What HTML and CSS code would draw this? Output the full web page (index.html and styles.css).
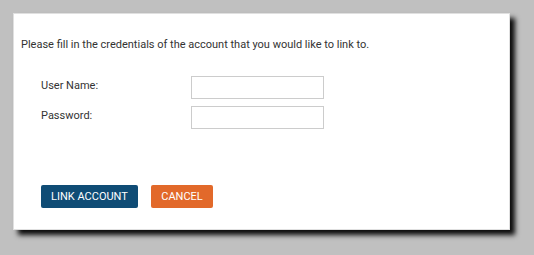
FILE: index.html
```html
<!DOCTYPE html>
<html>
<head>
<meta charset="utf-8">
<link rel="stylesheet" href="styles.css">
</head>
<body>
<div class="dialog">
  <p class="intro">Please fill in the credentials of the account that you would like to link to.</p>
  <div class="form">
    <div class="row">
      <label class="label">User Name:</label>
      <input class="field" type="text">
    </div>
    <div class="row">
      <label class="label">Password:</label>
      <input class="field" type="password">
    </div>
  </div>
  <div class="actions">
    <button class="btn btn-primary">LINK ACCOUNT</button>
    <button class="btn btn-cancel">CANCEL</button>
  </div>
</div>
</body>
</html>
```
FILE: styles.css
```css
html, body {
  margin: 0;
  padding: 0;
  background: #c0c0c0;
}
body {
  padding: 13px;
  font-family: Roboto, "Liberation Sans", sans-serif;
  font-size: 11px;
  color: #333;
}
.dialog {
  box-sizing: border-box;
  width: 497px;
  height: 217px;
  background: #fff;
  border: 1px solid #e0e0e0;
  box-shadow: 5px 5px 5px rgba(0,0,0,0.95);
  padding: 24px 0 0 7px;
}
.intro {
  margin: 0;
  line-height: 13px;
}
.form {
  margin-top: 25px;
  padding-left: 20px;
  display: flex;
  flex-direction: column;
  gap: 7px;
}
.row {
  display: flex;
  align-items: center;
}
.label {
  width: 150px;
  line-height: 13px;
  margin-top: -4px;
}
.field {
  box-sizing: border-box;
  width: 133px;
  height: 23px;
  border: 1px solid #ccc;
  margin: 0;
  padding: 2px 4px;
  font-family: inherit;
  font-size: 11px;
}
.actions {
  margin-top: 56px;
  padding-left: 20px;
  display: flex;
  gap: 13px;
}
.btn {
  height: 23px;
  border: none;
  border-radius: 2px;
  color: #fff;
  font-family: Roboto, "Liberation Sans", sans-serif;
  font-size: 11px;
  padding: 0;
  margin: 0;
  white-space: nowrap;
}
.btn-primary {
  background: #0f4c75;
  width: 97px;
}
.btn-cancel {
  background: #e2692a;
  width: 62px;
}
```
